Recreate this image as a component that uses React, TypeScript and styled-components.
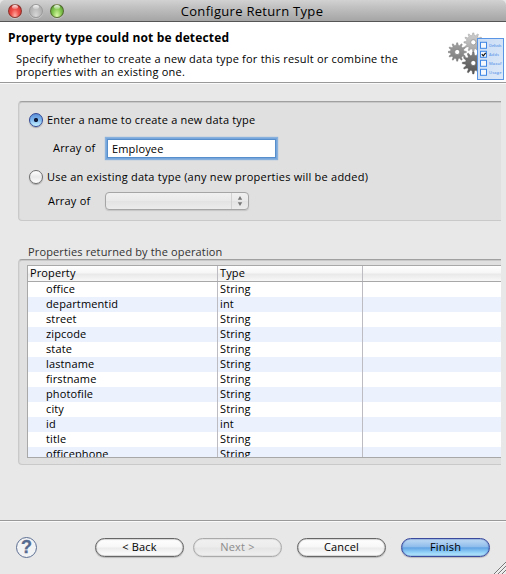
import React from "react";
import styled, { createGlobalStyle } from "styled-components";

const GlobalStyle = createGlobalStyle`
  html, body { margin: 0; padding: 0; overflow: hidden; background: #e8e8e8; }
  *, *::before, *::after { box-sizing: border-box; }
  body { font-family: "Open Sans", "Noto Sans", sans-serif; font-size: 11px; color: #000; }
`;

const Window = styled.div`
  width: 506px;
  height: 574px;
  display: flex;
  flex-direction: column;
  background: #e8e8e8;
  overflow: hidden;
`;

const TitleBar = styled.header`
  flex: none;
  height: 22px;
  display: grid;
  grid-template-columns: 64px 1fr 74px;
  align-items: center;
  padding-left: 8px;
  border-bottom: 1px solid #555;
  border-radius: 5px 5px 0 0;
  background: linear-gradient(#d2d2d2 0, #c3c3c3 30%, #a5a5a5 100%);
`;

const Lights = styled.div`
  display: flex;
  gap: 7px;
`;

const lightColors = {
  red: "radial-gradient(ellipse at 50% 90%, #ffb0a5 0, #f0504a 45%, #c42a28 100%)",
  gray: "radial-gradient(ellipse at 50% 90%, #d8d8d8 0, #b9b9b9 55%, #a6a6a6 100%)",
  green: "radial-gradient(ellipse at 50% 90%, #dcfaa8 0, #86c852 50%, #4a9028 100%)",
};

const Light = styled.span<{ $tone: keyof typeof lightColors }>`
  position: relative;
  width: 14px;
  height: 14px;
  border-radius: 50%;
  border: 1px solid ${(p) => (p.$tone === "gray" ? "#999" : "rgba(60,40,30,0.5)")};
  background: ${(p) => lightColors[p.$tone]};
  box-shadow: 0 1px 0 rgba(255, 255, 255, 0.35);
  &::after {
    content: "";
    position: absolute;
    left: 3px;
    top: 0;
    width: 6px;
    height: 4px;
    border-radius: 50%;
    background: linear-gradient(rgba(255, 255, 255, 0.9), rgba(255, 255, 255, 0.2));
  }
`;

const Title = styled.h1`
  margin: 0;
  text-align: center;
  font-size: 13px;
  font-weight: 400;
  line-height: 20px;
  letter-spacing: 0.3px;
  white-space: nowrap;
`;

const Banner = styled.section`
  flex: none;
  height: 61px;
  display: flex;
  justify-content: space-between;
  padding: 8px 0 0 8px;
  background: #fff;
  border-bottom: 1px solid #999;
`;

const Heading = styled.h2`
  margin: 0;
  font-size: 12px;
  font-weight: 700;
  line-height: 16px;
  letter-spacing: 0.15px;
  white-space: nowrap;
`;

const Description = styled.p`
  margin: 6px 0 0 8px;
  line-height: 13px;
`;

const Line = styled.span<{ $track: number }>`
  display: block;
  white-space: nowrap;
  letter-spacing: ${(p) => p.$track}px;
`;

const Content = styled.main`
  flex: 1;
  min-height: 0;
  padding: 17px 5px 0 18px;
  border-top: 1px solid #fafafa;
`;

const Group = styled.section<{ $height: number }>`
  height: ${(p) => p.$height}px;
  border: 1px solid #c9c9c9;
  border-top: 1px solid #a0a0a0;
  border-right: 0;
  border-radius: 4px 0 0 4px;
  background: #e0e0e0;
  box-shadow: inset 0 1px 0 #c9c9c9, inset 1px 0 0 #d8d8d8;
`;

const Choices = styled(Group)`
  display: flex;
  flex-direction: column;
  padding: 10px 0 0 10px;
`;

const ChoiceRow = styled.div<{ $top?: number }>`
  display: flex;
  align-items: center;
  height: 16px;
  margin-top: ${(p) => p.$top ?? 0}px;
  gap: 4px;
`;

const FieldRow = styled.div<{ $indent: number; $top: number; $gap: number; $height: number }>`
  display: flex;
  align-items: center;
  height: ${(p) => p.$height}px;
  margin-top: ${(p) => p.$top}px;
  padding-left: ${(p) => p.$indent}px;
  gap: ${(p) => p.$gap}px;
`;

const Label = styled.label<{ $track: number; $width?: number; $lift?: number }>`
  line-height: 16px;
  width: ${(p) => (p.$width ? `${p.$width}px` : "auto")};
  padding-bottom: ${(p) => p.$lift ?? 0}px;
  letter-spacing: ${(p) => p.$track}px;
  white-space: nowrap;
`;

const Radio = styled.span<{ $on?: boolean }>`
  flex: none;
  width: 14px;
  height: 14px;
  border-radius: 50%;
  border: 1px solid ${(p) => (p.$on ? "#2f4796" : "#6e6e6e")};
  background: ${(p) =>
    p.$on
      ? "radial-gradient(circle at 50% 50%, #101c3c 0 1.7px, transparent 2.5px), linear-gradient(#5a8fd8 0, #7fb8ee 50%, #c9f4ff 100%)"
      : "linear-gradient(#fff 0, #e9e9e9 50%, #fff 100%)"};
  box-shadow: 0 1px 1px rgba(0, 0, 0, 0.25);
`;

const TextField = styled.input`
  width: 169px;
  height: 19px;
  padding: 0 0 1px 4px;
  border: 1px solid #568fcb;
  border-radius: 0;
  outline: 0;
  font: inherit;
  line-height: 16px;
  letter-spacing: 0.15px;
  background: #fff;
  box-shadow: 0 0 0 1px #76a6db, 0 0 1px 2px rgba(120, 168, 220, 0.85);
`;

const Popup = styled.div`
  width: 144px;
  height: 18px;
  display: flex;
  justify-content: flex-end;
  border: 1px solid #a5a5a5;
  border-radius: 4px;
  background: linear-gradient(#f0f0f0 0, #e9e9e9 50%, #e3e3e3 52%, #ececec 100%);
  box-shadow: 0 1px 1px rgba(0, 0, 0, 0.12);
`;

const PopupArrows = styled.span`
  width: 17px;
  display: flex;
  align-items: center;
  justify-content: center;
  border-left: 1px solid #d2d2d2;
`;

const SectionLabel = styled.div`
  height: 16px;
  margin: 22px 0 0 10px;
  line-height: 17px;
  color: #333;
  letter-spacing: 0.14px;
`;

const TableGroup = styled(Group)`
  padding: 5px 0 0 8px;
`;

const Table = styled.div`
  height: 193px;
  border: 1px solid #a8a8a8;
  border-right: 0;
  overflow: hidden;
  background: #fff;
`;

const Row = styled.div<{ $odd?: boolean }>`
  display: grid;
  grid-template-columns: 190px 145px 1fr;
  height: 15px;
  line-height: 13px;
  background: ${(p) => (p.$odd ? "#ebf1fd" : "#fff")};
`;

const HeadRow = styled(Row)`
  height: 16px;
  border-bottom: 1px solid #a8a8a8;
  background: linear-gradient(#fff 0, #f6f6f6 45%, #e9e9e9 55%, #f8f8f8 100%);
`;

const Cell = styled.span<{ $indent?: boolean; $last?: boolean }>`
  padding-left: ${(p) => (p.$indent ? 18 : 2)}px;
  border-right: ${(p) => (p.$last ? "0" : "1px solid #bcbcc2")};
  letter-spacing: 0.12px;
  white-space: nowrap;
`;

const Footer = styled.footer`
  position: relative;
  flex: none;
  height: 54px;
  display: flex;
  align-items: center;
  padding: 0 15px 1px 16px;
  border-top: 1px solid #999;
  box-shadow: inset 0 1px 0 #fafafa;
`;

const ButtonBar = styled.div`
  display: flex;
  gap: 15px;
  margin-left: 58px;
`;

const ButtonPair = styled.div`
  display: flex;
  gap: 9px;
`;

const PushButton = styled.button<{ $kind?: "primary" | "disabled" }>`
  width: 89px;
  height: 19px;
  padding: 0;
  font: inherit;
  line-height: 16px;
  letter-spacing: 0.2px;
  border-radius: 10px;
  color: ${(p) => (p.$kind === "disabled" ? "#8c8c8c" : "#000")};
  border: 1px solid
    ${(p) => (p.$kind === "primary" ? "#3c4a9e" : p.$kind === "disabled" ? "#aaa" : "#666")};
  background: ${(p) =>
    p.$kind === "primary"
      ? "linear-gradient(#c3dcf5 0, #8fbdec 45%, #62a4e3 52%, #8ccbf6 75%, #bdeeff 100%)"
      : p.$kind === "disabled"
        ? "linear-gradient(#f1f1f1 0, #ececec 48%, #e5e5e5 52%, #f0f0f0 100%)"
        : "linear-gradient(#fff 0, #f7f7f7 48%, #ebebeb 52%, #fff 100%)"};
  box-shadow: inset 0 0 1px 0.5px
      ${(p) => (p.$kind === "primary" ? "rgba(50,80,160,.5)" : p.$kind === "disabled" ? "rgba(0,0,0,.12)" : "rgba(0,0,0,.3)")},
    0 1px 1px rgba(0, 0, 0, ${(p) => (p.$kind === "disabled" ? 0.05 : 0.2)});
`;

const HelpButton = styled.span`
  flex: none;
  width: 21px;
  height: 21px;
  display: grid;
  place-items: center;
  border: 1px solid #5d6f93;
  border-radius: 50%;
  background: #f2f3f5;
  color: #566a90;
  font: 700 18px/19px "Liberation Sans", sans-serif;
  -webkit-text-stroke: 0.3px #566a90;
`;

const Grip = styled.svg`
  position: absolute;
  right: 0;
  bottom: 0;
`;

function gearPath(cx: number, cy: number, outer: number, inner: number, teeth: number) {
  const pts: string[] = [];
  const step = (Math.PI * 2) / teeth;
  for (let i = 0; i < teeth; i++) {
    const a = i * step;
    [
      [-0.3, inner],
      [-0.12, outer],
      [0.12, outer],
      [0.3, inner],
    ].forEach(([o, r]) => {
      pts.push(`${(cx + Math.cos(a + o * step) * r).toFixed(2)},${(cy + Math.sin(a + o * step) * r).toFixed(2)}`);
    });
  }
  return `M${pts.join("L")}Z`;
}

function BannerArt() {
  const gears = [
    { x: 25.3, y: 12.3, o: 9.4, i: 6.9, f: "url(#g1)", s: "#8c8c8c" },
    { x: 9.2, y: 22, o: 9.2, i: 6.8, f: "url(#g2)", s: "#777" },
    { x: 25.3, y: 33, o: 11, i: 7.8, f: "url(#g3)", s: "#555" },
  ];
  const items = ["Delivds", "Adds", "Maxof", "Usage"];
  return (
    <svg width="58" height="52" viewBox="0 0 58 52">
      <defs>
        <linearGradient id="g1" x2="0" y2="1">
          <stop stopColor="#d0d0d0" />
          <stop offset="1" stopColor="#a4a4a4" />
        </linearGradient>
        <linearGradient id="g2" x2="0" y2="1">
          <stop stopColor="#a0a0a0" />
          <stop offset="1" stopColor="#7c7c7c" />
        </linearGradient>
        <linearGradient id="g3" x2="0" y2="1">
          <stop stopColor="#808080" />
          <stop offset="1" stopColor="#555" />
        </linearGradient>
        <linearGradient id="card" x2="1" y2="1">
          <stop stopColor="#c9dcf5" />
          <stop offset="1" stopColor="#dde9f8" />
        </linearGradient>
      </defs>
      {gears.map((g) => (
        <g key={g.f}>
          <path d={gearPath(g.x, g.y, g.o, g.i, 12)} fill={g.f} stroke={g.s} strokeWidth="0.4" />
          <circle cx={g.x} cy={g.y} r="2.6" fill="#fff" stroke={g.s} strokeWidth="0.7" />
        </g>
      ))}
      <rect x="29.5" y="8.5" width="26" height="41" fill="url(#card)" stroke="#5a94e4" />
      {items.map((t, i) => (
        <g key={t}>
          <rect x="32.5" y={12.3 + i * 9} width="6" height="6" fill="#f4f8fd" stroke="#3f86e4" />
          <text x="41" y={16.6 + i * 9} fontSize="4" textLength={t === "Adds" ? 10 : 12.5} fontWeight="600" fill="#6a9dea">
            {t}
          </text>
        </g>
      ))}
      <path d="M33.8 24.2l1.5 1.7 2.4-3" fill="none" stroke="#111" strokeWidth="1.2" />
    </svg>
  );
}

const rows: [string, string][] = [
  ["office", "String"],
  ["departmentid", "int"],
  ["street", "String"],
  ["zipcode", "String"],
  ["state", "String"],
  ["lastname", "String"],
  ["firstname", "String"],
  ["photofile", "String"],
  ["city", "String"],
  ["id", "int"],
  ["title", "String"],
  ["officephone", "String"],
];

export default function App() {
  return (
    <>
      <GlobalStyle />
      <Window>
        <TitleBar>
          <Lights>
            <Light $tone="red" />
            <Light $tone="gray" />
            <Light $tone="green" />
          </Lights>
          <Title>Configure Return Type</Title>
        </TitleBar>

        <Banner>
          <div>
            <Heading>Property type could not be detected</Heading>
            <Description>
              <Line $track={0.21}>Specify whether to create a new data type for this result or combine the</Line>
              <Line $track={0.24}>properties with an existing one.</Line>
            </Description>
          </div>
          <BannerArt />
        </Banner>

        <Content>
          <Choices $height={120}>
            <ChoiceRow>
              <Radio $on />
              <Label $track={0.19}>Enter a name to create a new data type</Label>
            </ChoiceRow>
            <FieldRow $indent={24} $top={11} $gap={11} $height={19}>
              <Label $track={0.2} $width={43} $lift={2}>Array of</Label>
              <TextField defaultValue="Employee" />
            </FieldRow>
            <ChoiceRow $top={11}>
              <Radio />
              <Label $track={0.23}>Use an existing data type (any new properties will be added)</Label>
            </ChoiceRow>
            <FieldRow $indent={19} $top={7} $gap={14} $height={18}>
              <Label $track={0.2} $width={43}>Array of</Label>
              <Popup>
                <PopupArrows>
                  <svg width="6" height="10" viewBox="0 0 6 10">
                    <path d="M3 0L5.2 3.8H.8zM3 10L.8 6.2h4.4z" fill="#777" />
                  </svg>
                </PopupArrows>
              </Popup>
            </FieldRow>
          </Choices>

          <SectionLabel>Properties returned by the operation</SectionLabel>
          <TableGroup $height={206}>
            <Table>
              <HeadRow>
                <Cell>Property</Cell>
                <Cell>Type</Cell>
                <Cell $last />
              </HeadRow>
              {rows.map(([name, type], i) => (
                <Row key={name} $odd={i % 2 === 1}>
                  <Cell $indent>{name}</Cell>
                  <Cell>{type}</Cell>
                  <Cell $last />
                </Row>
              ))}
            </Table>
          </TableGroup>
        </Content>

        <Footer>
          <HelpButton>?</HelpButton>
          <ButtonBar>
            <ButtonPair>
              <PushButton>&lt; Back</PushButton>
              <PushButton $kind="disabled">Next &gt;</PushButton>
            </ButtonPair>
            <PushButton>Cancel</PushButton>
            <PushButton $kind="primary">Finish</PushButton>
          </ButtonBar>
          <Grip width="12" height="12" viewBox="0 0 12 12">
            <path d="M0 12L12 0M4 12l8-8M8 12l4-4" stroke="#777" strokeWidth="1" />
            <path d="M1.2 12L12 1.2M5.2 12L12 5.2M9.2 12L12 9.2" stroke="#fff" strokeWidth=".6" />
          </Grip>
        </Footer>
      </Window>
    </>
  );
}
